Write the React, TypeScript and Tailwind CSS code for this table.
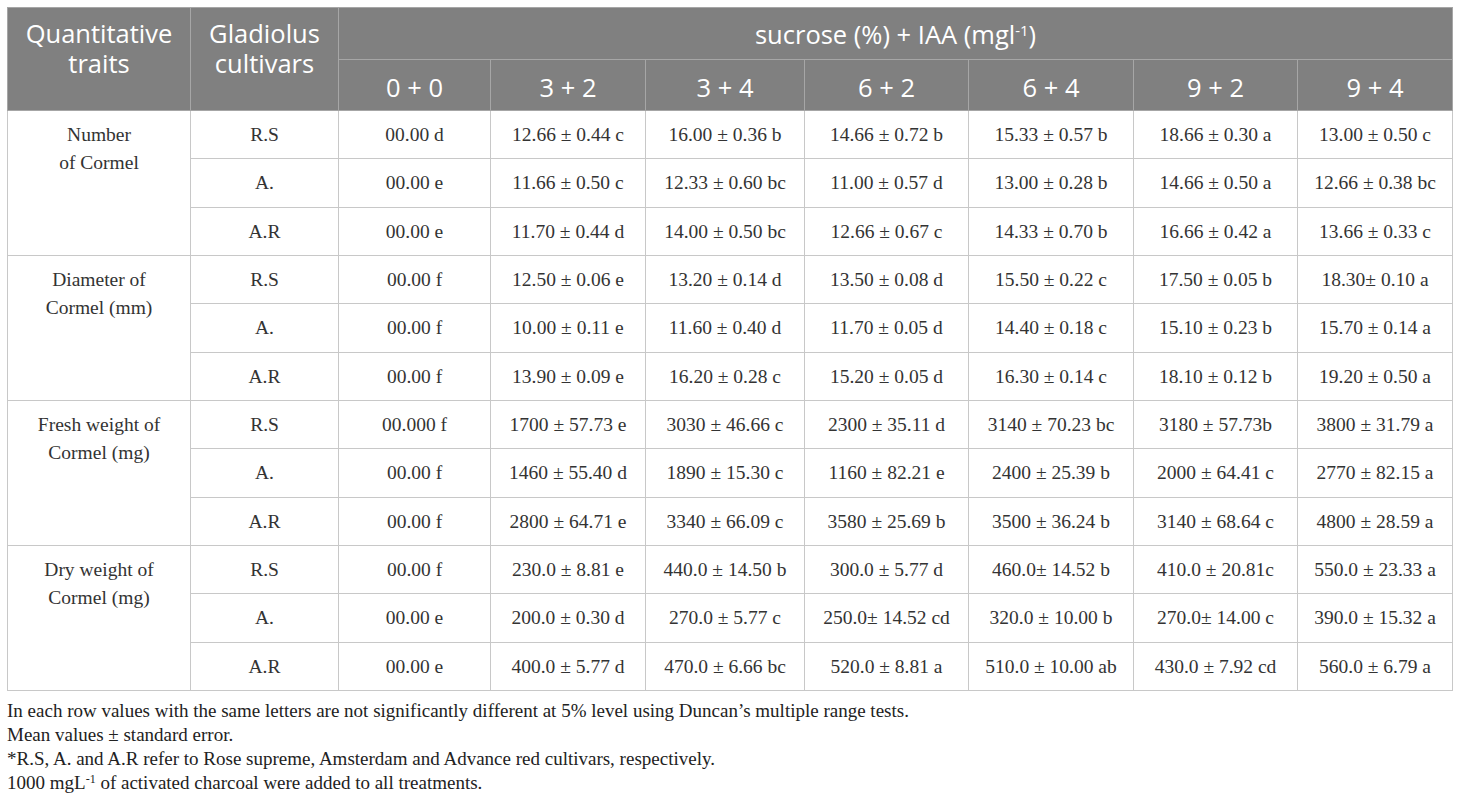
import React from "react";

const doses = ["0 + 0", "3 + 2", "3 + 4", "6 + 2", "6 + 4", "9 + 2", "9 + 4"];
const colW = ["w-[183px]", "w-[148px]", "w-[152px]", "w-[155px]", "w-[159px]", "w-[164px]", "w-[165px]", "w-[164px]", "w-[155px]"];

const groups = [
  {
    trait: ["Number", "of Cormel"],
    rows: [
      ["R.S", "00.00 d", "12.66 ± 0.44 c", "16.00 ± 0.36 b", "14.66 ± 0.72 b", "15.33 ± 0.57 b", "18.66 ± 0.30 a", "13.00 ± 0.50 c"],
      ["A.", "00.00 e", "11.66 ± 0.50 c", "12.33 ± 0.60 bc", "11.00 ± 0.57 d", "13.00 ± 0.28 b", "14.66 ± 0.50 a", "12.66 ± 0.38 bc"],
      ["A.R", "00.00 e", "11.70 ± 0.44 d", "14.00 ± 0.50 bc", "12.66 ± 0.67 c", "14.33 ± 0.70 b", "16.66 ± 0.42 a", "13.66 ± 0.33 c"],
    ],
  },
  {
    trait: ["Diameter of", "Cormel (mm)"],
    rows: [
      ["R.S", "00.00 f", "12.50 ± 0.06 e", "13.20 ± 0.14 d", "13.50 ± 0.08 d", "15.50 ± 0.22 c", "17.50 ± 0.05 b", "18.30± 0.10 a"],
      ["A.", "00.00 f", "10.00 ± 0.11 e", "11.60 ± 0.40 d", "11.70 ± 0.05 d", "14.40 ± 0.18 c", "15.10 ± 0.23 b", "15.70 ± 0.14 a"],
      ["A.R", "00.00 f", "13.90 ± 0.09 e", "16.20 ± 0.28 c", "15.20 ± 0.05 d", "16.30 ± 0.14 c", "18.10 ± 0.12 b", "19.20 ± 0.50 a"],
    ],
  },
  {
    trait: ["Fresh weight of", "Cormel (mg)"],
    rows: [
      ["R.S", "00.000 f", "1700 ± 57.73 e", "3030 ± 46.66 c", "2300 ± 35.11 d", "3140 ± 70.23 bc", "3180 ± 57.73b", "3800 ± 31.79 a"],
      ["A.", "00.00 f", "1460 ± 55.40 d", "1890 ± 15.30 c", "1160 ± 82.21 e", "2400 ± 25.39 b", "2000 ± 64.41 c", "2770 ± 82.15 a"],
      ["A.R", "00.00 f", "2800 ± 64.71 e", "3340 ± 66.09 c", "3580 ± 25.69 b", "3500 ± 36.24 b", "3140 ± 68.64 c", "4800 ± 28.59 a"],
    ],
  },
  {
    trait: ["Dry weight of", "Cormel (mg)"],
    rows: [
      ["R.S", "00.00 f", "230.0 ± 8.81 e", "440.0 ± 14.50 b", "300.0 ± 5.77 d", "460.0± 14.52 b", "410.0 ± 20.81c", "550.0 ± 23.33 a"],
      ["A.", "00.00 e", "200.0 ± 0.30 d", "270.0 ± 5.77 c", "250.0± 14.52 cd", "320.0 ± 10.00 b", "270.0± 14.00 c", "390.0 ± 15.32 a"],
      ["A.R", "00.00 e", "400.0 ± 5.77 d", "470.0 ± 6.66 bc", "520.0 ± 8.81 a", "510.0 ± 10.00 ab", "430.0 ± 7.92 cd", "560.0 ± 6.79 a"],
    ],
  },
];

const sans = "font-['Open_Sans',_'Liberation_Sans',_sans-serif]";
const serif = "font-['Liberation_Serif',_'DejaVu_Serif',_serif]";

export default function App() {
  return (
    <div className="min-h-[802px] bg-white pt-[7px] pl-[7px]">
      <table className="table-fixed border-collapse w-[1445px] text-[#333]">
        <colgroup>
          {colW.map((w, i) => (
            <col key={i} className={w} />
          ))}
        </colgroup>
        <thead className={`${sans} bg-[#808080] text-white text-[25.5px]`}>
          <tr className="h-[52px]">
            <th rowSpan={2} className="border border-[#a6a6a6] align-top pt-[10px] font-normal leading-[30px]">
              Quantitative
              <br />
              traits
            </th>
            <th rowSpan={2} className="border border-[#a6a6a6] align-top pt-[10px] font-normal leading-[30px]">
              Gladiolus
              <br />
              cultivars
            </th>
            <th colSpan={7} className="border border-[#a6a6a6] font-normal leading-[30px]">
              sucrose (%) + IAA (mgl<sup className="text-[15px]">-1</sup>)
            </th>
          </tr>
          <tr className="h-[51px]">
            {doses.map((d) => (
              <th key={d} className="border border-[#a6a6a6] font-normal pt-[4px]">
                {d}
              </th>
            ))}
          </tr>
        </thead>
        <tbody className={`${serif} text-[19.5px]`}>
          {groups.map((g) =>
            g.rows.map((r, i) => (
              <tr key={g.trait[0] + i} className="h-[48.33px]">
                {i === 0 && (
                  <td rowSpan={3} className="border border-[#c8c8c8] align-top text-center pt-[10px] leading-[28px]">
                    {g.trait[0]}
                    <br />
                    {g.trait[1]}
                  </td>
                )}
                {r.map((c, j) => (
                  <td key={j} className="border border-[#c8c8c8] text-center whitespace-nowrap">
                    {c}
                  </td>
                ))}
              </tr>
            ))
          )}
        </tbody>
      </table>
      <div className={`${serif} text-[19px] leading-[24px] text-[#222] pt-[8px]`}>
        <p>In each row values with the same letters are not significantly different at 5% level using Duncan’s multiple range tests.</p>
        <p>Mean values ± standard error.</p>
        <p>*R.S, A. and A.R refer to Rose supreme, Amsterdam and Advance red cultivars, respectively.</p>
        <p>
          1000 mgL<sup className="text-[12px]">-1</sup> of activated charcoal were added to all treatments.
        </p>
      </div>
    </div>
  );
}
